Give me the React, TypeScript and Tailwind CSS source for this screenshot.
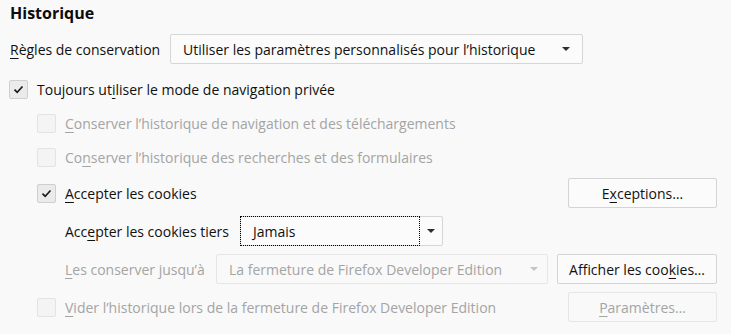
import type { ReactNode } from "react";

const font = { fontFamily: '"Open Sans", "Noto Sans", sans-serif' };

function CheckBox({ checked = false, disabled = false }: { checked?: boolean; disabled?: boolean }) {
  return (
    <span
      className={`flex h-[19px] w-[19px] shrink-0 items-center justify-center rounded-[2px] border ${
        disabled ? "border-[#e3e3e3] bg-[#f4f4f4]" : "border-[#cfcfcf] bg-[#ebebeb]"
      }`}
    >
      {checked && (
        <svg width="11" height="9" viewBox="0 0 11 9" fill="none">
          <path d="M1.5 4.6 L4.2 7.3 L9.5 1.5" stroke="#1b1b1b" strokeWidth="1.7" />
        </svg>
      )}
    </span>
  );
}

function Arrow({ disabled = false }: { disabled?: boolean }) {
  return (
    <svg width="8" height="4" viewBox="0 0 8 4">
      <path d="M0 0 H8 L4 4 Z" fill={disabled ? "#c4c4c4" : "#2e2e2e"} />
    </svg>
  );
}

function Key({ children }: { children: ReactNode }) {
  return <span className="underline decoration-1 underline-offset-[3px]">{children}</span>;
}

function Button({ children, width, disabled = false }: { children: ReactNode; width: string; disabled?: boolean }) {
  return (
    <div
      className={`flex h-[30px] ${width} items-center justify-center rounded-[2px] border ${
        disabled ? "border-[#e6e6e6] bg-[#f9f9f9] text-[#a4a4a4]" : "border-[#d4d4d4] bg-[#fbfbfb] text-[#111]"
      }`}
    >
      {children}
    </div>
  );
}

export default function App() {
  return (
    <div className="h-[334px] w-[731px] overflow-hidden bg-[#f9f9f9] text-[14px] text-[#101010]" style={font}>
      {/* Title */}
      <div className="h-[34px] pl-[10px] pt-[1px] text-[16px] font-bold leading-[24px] text-[#0c0c0d]">Historique</div>

      {/* Retention rules */}
      <div className="flex h-[30px] items-center pl-[10px]">
        <span className="w-[160px]">
          <Key>R</Key>ègles de conservation
        </span>
        <div className="flex h-[30px] w-[413px] items-center justify-between rounded-[2px] border border-[#d6d6d6] bg-[#fbfbfb] pl-[12px] pr-[12px]">
          <span>Utiliser les paramètres personnalisés pour l’historique</span>
          <Arrow />
        </div>
      </div>

      <div className="mt-[8px] flex h-[34px] items-center gap-[9px] pl-[9px]">
        <CheckBox checked />
        <span>
          Toujours ut<Key>i</Key>liser le mode de navigation privée
        </span>
      </div>

      <div className="pl-[37px]">
        <div className="flex h-[34px] items-center gap-[9px] text-[#a4a4a4]">
          <CheckBox disabled />
          <span>
            <Key>C</Key>onserver l’historique de navigation et des téléchargements
          </span>
        </div>
        <div className="flex h-[34px] items-center gap-[9px] text-[#a4a4a4]">
          <CheckBox disabled />
          <span>
            Co<Key>n</Key>server l’historique des recherches et des formulaires
          </span>
        </div>

        {/* Cookies */}
        <div className="flex h-[38px] items-center pr-[14px]">
          <CheckBox checked />
          <span className="ml-[9px] flex-1">
            <Key>A</Key>ccepter les cookies
          </span>
          <Button width="w-[149px]">
            E<Key>x</Key>ceptions…
          </Button>
        </div>

        <div className="flex h-[38px] items-center pl-[28px]">
          <span className="w-[175px]">
            Acc<Key>e</Key>pter les cookies tiers
          </span>
          <div className="flex h-[30px] w-[203px] rounded-[2px] border border-[#d6d6d6] bg-[#fbfbfb]">
            <div className="-my-px -ml-px flex flex-1 items-center border border-dotted border-black pl-[12px]">Jamais</div>
            <div className="flex w-[22px] items-center justify-center">
              <Arrow />
            </div>
          </div>
        </div>

        <div className="flex h-[38px] items-center pl-[28px] pr-[14px]">
          <span className="w-[151px] text-[#a4a4a4]">
            <Key>L</Key>es conserver jusqu’à
          </span>
          <div className="flex h-[30px] w-[332px] items-center justify-between rounded-[2px] border border-[#e6e6e6] pl-[12px] pr-[9px] text-[#a4a4a4]">
            <span>La fermeture de Firefox Developer Edition</span>
            <Arrow disabled />
          </div>
          <div className="ml-auto">
            <Button width="w-[160px]">
              Afficher les coo<Key>k</Key>ies…
            </Button>
          </div>
        </div>

        <div className="flex h-[38px] items-center pr-[14px] text-[#a4a4a4]">
          <CheckBox disabled />
          <span className="ml-[9px] flex-1">
            <Key>V</Key>ider l’historique lors de la fermeture de Firefox Developer Edition
          </span>
          <Button width="w-[149px]" disabled>
            <Key>P</Key>aramètres…
          </Button>
        </div>
      </div>
    </div>
  );
}
